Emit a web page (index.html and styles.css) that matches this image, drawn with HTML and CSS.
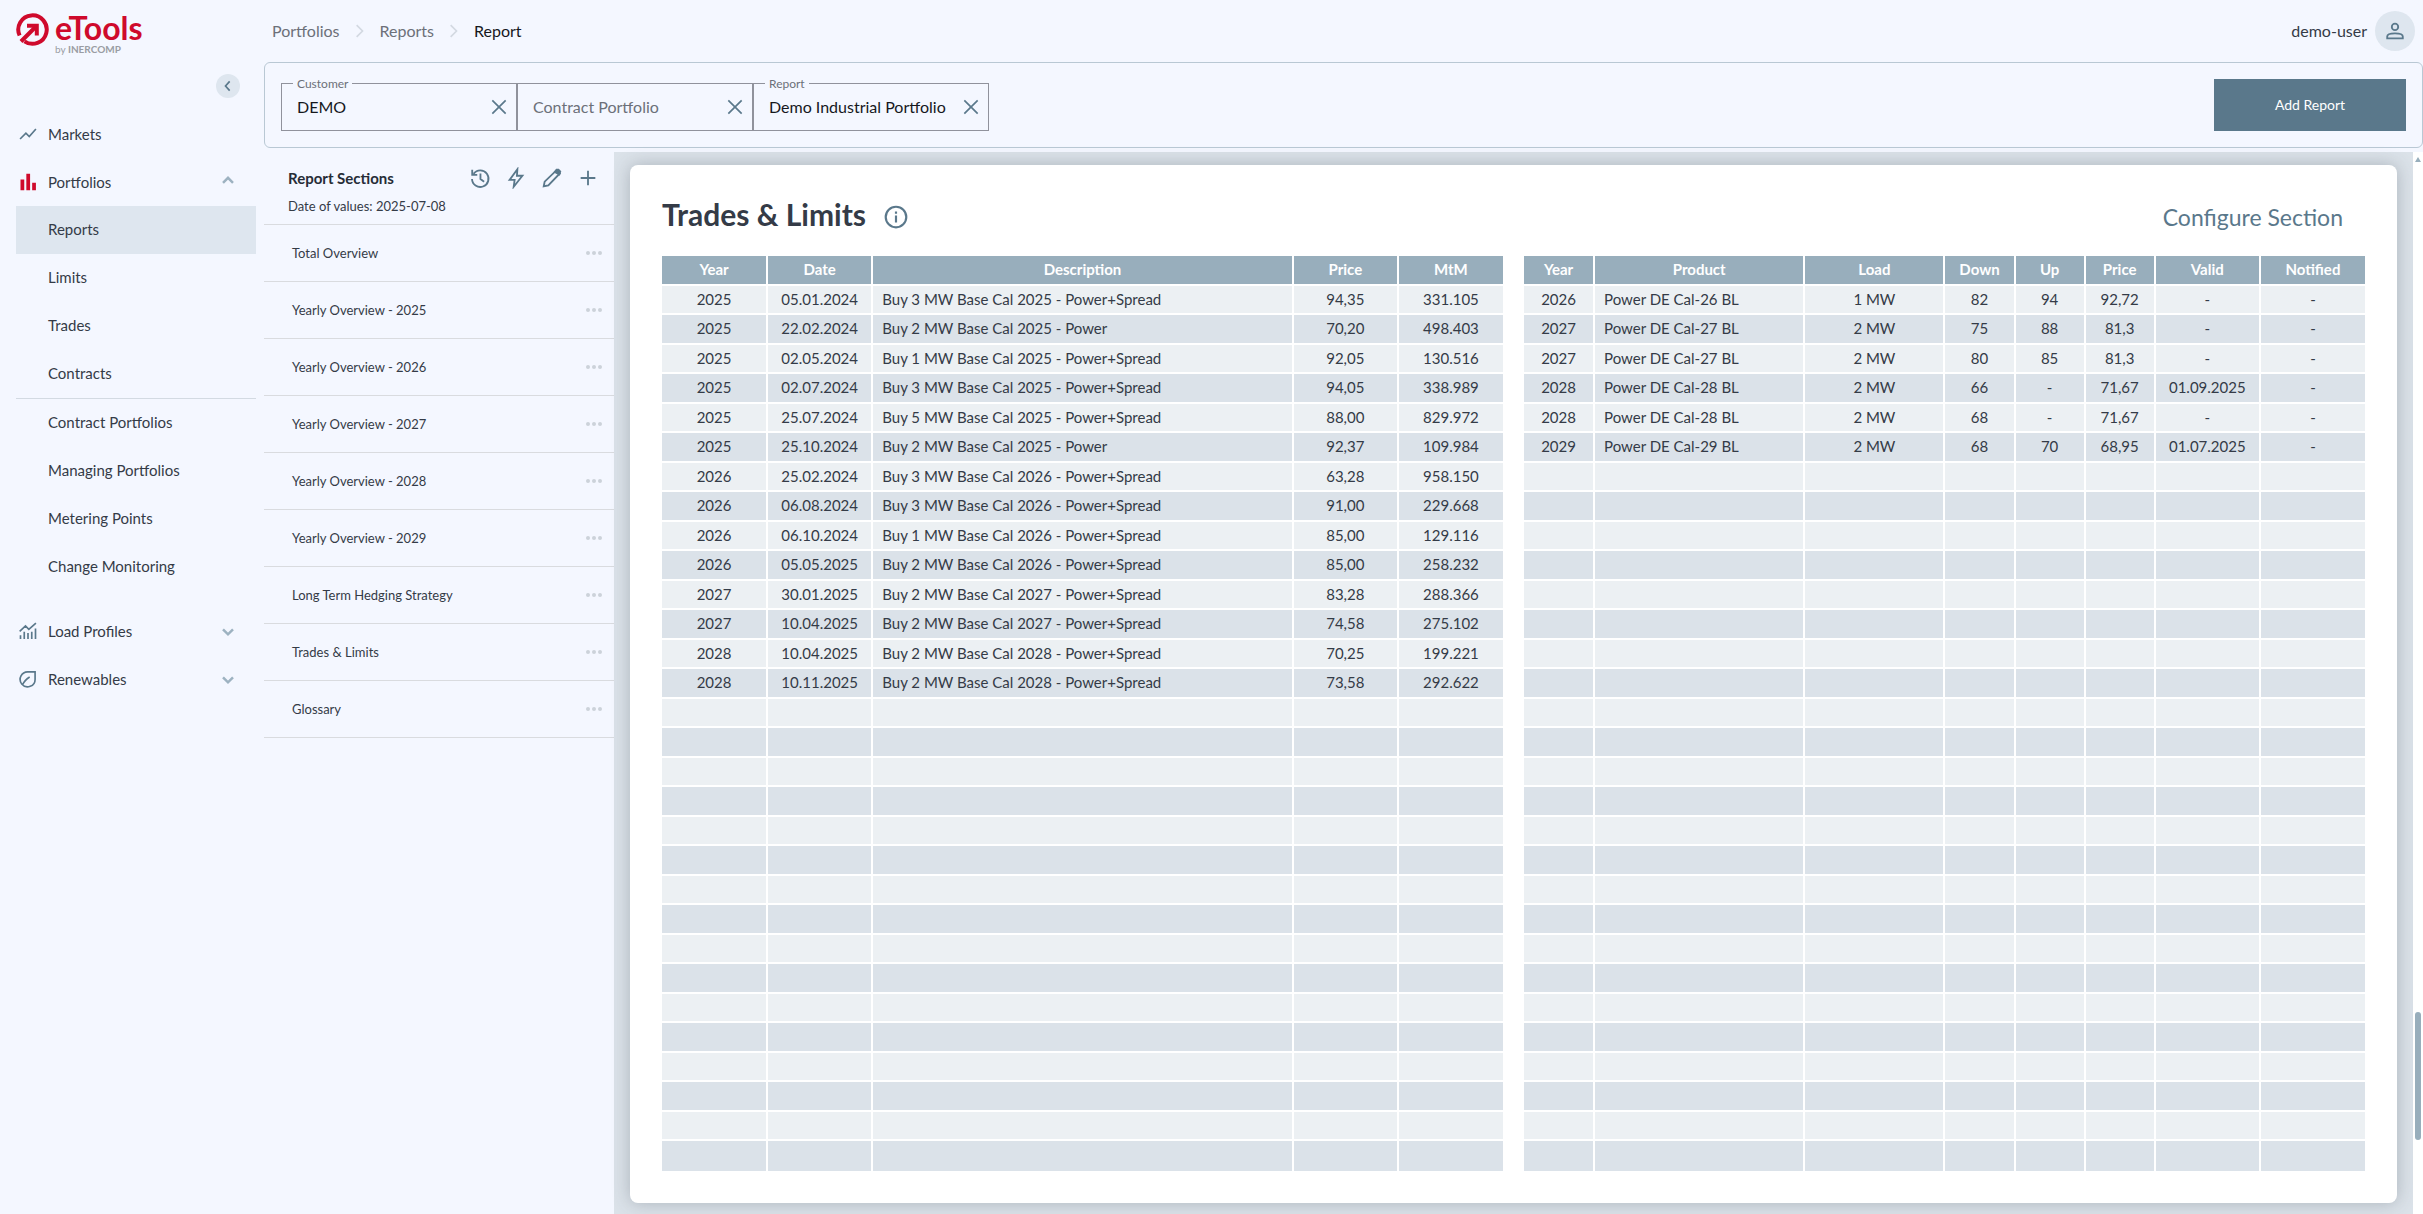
FILE: index.html
```html
<!DOCTYPE html>
<html lang="en">
<head>
<meta charset="utf-8">
<title>eTools - Report</title>
<link rel="stylesheet" href="styles.css">
</head>
<body>
<div class="app">
  <nav class="sidebar">
    <a class="logo" href="#">
      <svg class="logo-mark" viewBox="0 0 33 33"><path d="M3.600 22.500A14.200 14.200 0 1 1 8.500 28.300"/><path d="M5 28.500 20 13.500"/><path d="M11 12.700H20.800V22.500"/></svg>
      <span class="logo-words"><span class="logo-name">eTools</span><span class="logo-by">by <b>INERCOMP</b></span></span>
    </a>
    <button class="collapse" aria-label="Collapse menu"><svg viewBox="0 0 24 24"><path d="M14 6.500 9 12l5 5.500"/></svg></button>
    <ul class="menu">
      <li><a class="item" href="#"><svg class="icon" viewBox="0 0 24 24"><path d="M2.500 18 9.500 11l4 4L21.500 6"/></svg><span>Markets</span></a></li>
      <li><a class="item" href="#"><svg class="icon bars" viewBox="0 0 24 24"><path d="M3 9h4.500v13H3zM10 2h4.500v20H10zM17 13h4.500v9H17z"/></svg><span>Portfolios</span><svg class="chev" viewBox="0 0 24 24"><path d="m6 13 6-6 6 6"/></svg></a>
        <ul class="submenu">
          <li><a class="item sub active" href="#">Reports</a></li>
          <li><a class="item sub" href="#">Limits</a></li>
          <li><a class="item sub" href="#">Trades</a></li>
          <li><a class="item sub" href="#">Contracts</a></li>
          <li class="split"><a class="item sub" href="#">Contract Portfolios</a></li>
          <li><a class="item sub" href="#">Managing Portfolios</a></li>
          <li><a class="item sub" href="#">Metering Points</a></li>
          <li><a class="item sub" href="#">Change Monitoring</a></li>
        </ul>
      </li>
      <li><a class="item" href="#"><svg class="icon" viewBox="0 0 24 24"><path d="M2 12.500 9 6l4 4 8.500-7.500M3 17v4.500M7.500 13v8.500M12 14.500v7M16.500 13v8.500M21 9v12.500"/></svg><span>Load Profiles</span><svg class="chev" viewBox="0 0 24 24"><path d="m6 10 6 6 6-6"/></svg></a></li>
      <li><a class="item" href="#"><svg class="icon" viewBox="0 0 24 24"><path d="M20.500 3.500H12A9 9 0 0 0 4.500 18 9 9 0 0 0 20.500 12zM5 19.500C7 15.500 9.500 12 14 9.500"/></svg><span>Renewables</span><svg class="chev" viewBox="0 0 24 24"><path d="m6 10 6 6 6-6"/></svg></a></li>
    </ul>
  </nav>

  <div class="page">
    <header class="topbar">
      <nav class="crumbs" aria-label="Breadcrumb">
        <a href="#">Portfolios</a><svg viewBox="0 0 24 24"><path d="m8 5 7 7-7 7"/></svg><a href="#">Reports</a><svg viewBox="0 0 24 24"><path d="m8 5 7 7-7 7"/></svg><span>Report</span>
      </nav>
      <div class="user"><span>demo-user</span><button class="avatar" aria-label="Account"><svg viewBox="0 0 24 24"><circle cx="12" cy="7.500" r="3.500"/><path d="M3.500 20v-2c0-4.500 17-4.500 17 0v2z"/></svg></button></div>
    </header>

    <form class="filters">
      <div class="field"><label for="customer">Customer</label><input id="customer" value="DEMO"><button type="button" aria-label="Clear customer"><svg viewBox="0 0 24 24"><path d="m4 4 16 16M20 4 4 20"/></svg></button></div>
      <div class="field"><input id="contract" placeholder="Contract Portfolio" aria-label="Contract Portfolio"><button type="button" aria-label="Clear contract portfolio"><svg viewBox="0 0 24 24"><path d="m4 4 16 16M20 4 4 20"/></svg></button></div>
      <div class="field"><label for="report">Report</label><input id="report" value="Demo Industrial Portfolio"><button type="button" aria-label="Clear report"><svg viewBox="0 0 24 24"><path d="m4 4 16 16M20 4 4 20"/></svg></button></div>
      <button type="button" class="add">Add Report</button>
    </form>

    <div class="workspace">
      <aside class="sections">
        <div class="sections-head">
          <div class="sections-row">
            <h2>Report Sections</h2>
            <div class="tools">
              <button aria-label="History"><svg viewBox="0 0 24 24"><path d="M5 7.500A9 9 0 1 1 3.300 13M3.500 3v5.500H9M12.500 7v6l4 3"/></svg></button>
              <button aria-label="Run"><svg viewBox="0 0 24 24"><path d="M13.500 2.500 5 14h5.500L9.500 21.500 19 9.500h-6z"/></svg></button>
              <button aria-label="Edit"><svg viewBox="0 0 24 24"><path d="m3 21 1-5L17 3.500 20.500 7 8 20z"/><path d="m15 5.500 2-2.500h2l2 2-1 3z" fill="#5a788b"/></svg></button>
              <button aria-label="Add"><svg viewBox="0 0 24 24"><path d="M12 4v16M4 12h16"/></svg></button>
            </div>
          </div>
          <p>Date of values: 2025-07-08</p>
        </div>
        <ul class="section-list">
          <li><a href="#">Total Overview</a><button aria-label="More"><i></i><i></i><i></i></button></li>
          <li><a href="#">Yearly Overview - 2025</a><button aria-label="More"><i></i><i></i><i></i></button></li>
          <li><a href="#">Yearly Overview - 2026</a><button aria-label="More"><i></i><i></i><i></i></button></li>
          <li><a href="#">Yearly Overview - 2027</a><button aria-label="More"><i></i><i></i><i></i></button></li>
          <li><a href="#">Yearly Overview - 2028</a><button aria-label="More"><i></i><i></i><i></i></button></li>
          <li><a href="#">Yearly Overview - 2029</a><button aria-label="More"><i></i><i></i><i></i></button></li>
          <li><a href="#">Long Term Hedging Strategy</a><button aria-label="More"><i></i><i></i><i></i></button></li>
          <li><a href="#">Trades &amp; Limits</a><button aria-label="More"><i></i><i></i><i></i></button></li>
          <li><a href="#">Glossary</a><button aria-label="More"><i></i><i></i><i></i></button></li>
        </ul>
      </aside>

      <main class="canvas">
        <article class="card">
          <div class="card-head">
            <h1>Trades &amp; Limits</h1>
            <svg class="info" viewBox="0 0 24 24"><circle cx="12" cy="12" r="9.500"/><path d="M12 10.500V17M12 7v2"/></svg>
            <a href="#">Configure Section</a>
          </div>
          <div class="tables">
            <table class="trades">
              <colgroup><col class="w12"><col class="w12"><col class="w50"><col class="w12"><col class="w12"></colgroup>
              <thead><tr><th>Year<th>Date<th>Description<th>Price<th>MtM</thead>
              <tbody>
                <tr><td>2025<td>05.01.2024<td>Buy 3 MW Base Cal 2025 - Power+Spread<td>94,35<td>331.105
                <tr><td>2025<td>22.02.2024<td>Buy 2 MW Base Cal 2025 - Power<td>70,20<td>498.403
                <tr><td>2025<td>02.05.2024<td>Buy 1 MW Base Cal 2025 - Power+Spread<td>92,05<td>130.516
                <tr><td>2025<td>02.07.2024<td>Buy 3 MW Base Cal 2025 - Power+Spread<td>94,05<td>338.989
                <tr><td>2025<td>25.07.2024<td>Buy 5 MW Base Cal 2025 - Power+Spread<td>88,00<td>829.972
                <tr><td>2025<td>25.10.2024<td>Buy 2 MW Base Cal 2025 - Power<td>92,37<td>109.984
                <tr><td>2026<td>25.02.2024<td>Buy 3 MW Base Cal 2026 - Power+Spread<td>63,28<td>958.150
                <tr><td>2026<td>06.08.2024<td>Buy 3 MW Base Cal 2026 - Power+Spread<td>91,00<td>229.668
                <tr><td>2026<td>06.10.2024<td>Buy 1 MW Base Cal 2026 - Power+Spread<td>85,00<td>129.116
                <tr><td>2026<td>05.05.2025<td>Buy 2 MW Base Cal 2026 - Power+Spread<td>85,00<td>258.232
                <tr><td>2027<td>30.01.2025<td>Buy 2 MW Base Cal 2027 - Power+Spread<td>83,28<td>288.366
                <tr><td>2027<td>10.04.2025<td>Buy 2 MW Base Cal 2027 - Power+Spread<td>74,58<td>275.102
                <tr><td>2028<td>10.04.2025<td>Buy 2 MW Base Cal 2028 - Power+Spread<td>70,25<td>199.221
                <tr><td>2028<td>10.11.2025<td>Buy 2 MW Base Cal 2028 - Power+Spread<td>73,58<td>292.622
                <tr><td><td><td><td><td>
                <tr><td><td><td><td><td>
                <tr><td><td><td><td><td>
                <tr><td><td><td><td><td>
                <tr><td><td><td><td><td>
                <tr><td><td><td><td><td>
                <tr><td><td><td><td><td>
                <tr><td><td><td><td><td>
                <tr><td><td><td><td><td>
                <tr><td><td><td><td><td>
                <tr><td><td><td><td><td>
                <tr><td><td><td><td><td>
                <tr><td><td><td><td><td>
                <tr><td><td><td><td><td>
                <tr><td><td><td><td><td>
                <tr><td><td><td><td><td>
              </tbody>
            </table>
            <table class="limits">
              <colgroup><col class="w8"><col class="w25"><col class="w16"><col class="w8"><col class="w8"><col class="w8"><col class="w12"><col class="w12"></colgroup>
              <thead><tr><th>Year<th>Product<th>Load<th>Down<th>Up<th>Price<th>Valid<th>Notified</thead>
              <tbody>
                <tr><td>2026<td>Power DE Cal-26 BL<td>1 MW<td>82<td>94<td>92,72<td>-<td>-
                <tr><td>2027<td>Power DE Cal-27 BL<td>2 MW<td>75<td>88<td>81,3<td>-<td>-
                <tr><td>2027<td>Power DE Cal-27 BL<td>2 MW<td>80<td>85<td>81,3<td>-<td>-
                <tr><td>2028<td>Power DE Cal-28 BL<td>2 MW<td>66<td>-<td>71,67<td>01.09.2025<td>-
                <tr><td>2028<td>Power DE Cal-28 BL<td>2 MW<td>68<td>-<td>71,67<td>-<td>-
                <tr><td>2029<td>Power DE Cal-29 BL<td>2 MW<td>68<td>70<td>68,95<td>01.07.2025<td>-
                <tr><td><td><td><td><td><td><td><td>
                <tr><td><td><td><td><td><td><td><td>
                <tr><td><td><td><td><td><td><td><td>
                <tr><td><td><td><td><td><td><td><td>
                <tr><td><td><td><td><td><td><td><td>
                <tr><td><td><td><td><td><td><td><td>
                <tr><td><td><td><td><td><td><td><td>
                <tr><td><td><td><td><td><td><td><td>
                <tr><td><td><td><td><td><td><td><td>
                <tr><td><td><td><td><td><td><td><td>
                <tr><td><td><td><td><td><td><td><td>
                <tr><td><td><td><td><td><td><td><td>
                <tr><td><td><td><td><td><td><td><td>
                <tr><td><td><td><td><td><td><td><td>
                <tr><td><td><td><td><td><td><td><td>
                <tr><td><td><td><td><td><td><td><td>
                <tr><td><td><td><td><td><td><td><td>
                <tr><td><td><td><td><td><td><td><td>
                <tr><td><td><td><td><td><td><td><td>
                <tr><td><td><td><td><td><td><td><td>
                <tr><td><td><td><td><td><td><td><td>
                <tr><td><td><td><td><td><td><td><td>
                <tr><td><td><td><td><td><td><td><td>
                <tr><td><td><td><td><td><td><td><td>
              </tbody>
            </table>
          </div>
        </article>
      </main>
      <div class="scrollbar" aria-hidden="true"><span class="arrow"></span><span class="thumb"></span></div>
    </div>
  </div>
</div>
</body>
</html>
```
FILE: styles.css
```css
* { box-sizing: border-box; }
body {
  margin: 0;
  background: #f4f7ff;
  color: #343b47;
  font: 16px/24px Lato, "Noto Sans", sans-serif;
}
ul { list-style: none; margin: 0; padding: 0; }
a { color: inherit; text-decoration: none; }
button { border: 0; padding: 0; background: none; font: inherit; color: inherit; cursor: pointer; }
svg { fill: none; stroke: #5a788b; stroke-width: 2; flex: none; }

.app { display: flex; min-height: 100vh; }

/* Sidebar */
.sidebar { width: 264px; flex: none; padding: 13px 8px 0 16px; font-size: 15px; }
.logo { display: flex; gap: 6px; height: 42px; }
.logo-mark { width: 33px; height: 33px; stroke: #cf0a2c; stroke-width: 4; }
.logo-words { display: flex; flex-direction: column; }
.logo-name { color: #cf0a2c; font-size: 32px; line-height: 30px; font-weight: 700; }
.logo-by { color: #9a9da3; font-size: 10px; line-height: 12px; }
.collapse {
  display: flex; align-items: center; justify-content: center;
  width: 24px; height: 24px; margin: 19px 16px 0 auto;
  border-radius: 50%; background: #dee6ef;
}
.collapse svg { width: 20px; height: 20px; }
.menu { margin-top: 12px; }
.item { display: flex; align-items: center; height: 48px; padding-right: 18px; }
.icon { width: 20px; height: 20px; margin: 0 10px 0 2px; }
.bars { fill: #cf0a2c; stroke: none; }
.chev { width: 20px; height: 20px; margin-left: auto; stroke: #9db2c1; stroke-width: 3; }
.item.sub { padding: 0 0 2px 32px; }
.item.active { background: #dee6ef; }
.submenu { padding-bottom: 16px; }
.split { border-top: 1px solid #d3dae2; }

/* Header */
.page { flex: 1; min-width: 0; display: flex; flex-direction: column; }
.topbar { display: flex; justify-content: space-between; height: 62px; padding: 0 8px; align-items: center; }
.crumbs { display: flex; align-items: center; color: #6c7079; gap: 10px; }
.crumbs svg { width: 20px; height: 20px; stroke: #d3d9e2; }
.crumbs span { color: #16181d; }
.user { display: flex; align-items: center; gap: 8px; }
.avatar { display: flex; align-items: center; justify-content: center; width: 40px; height: 40px; border-radius: 50%; background: #dee6ef; }
.avatar svg { width: 22px; height: 22px; }

/* Filter bar */
.filters {
  display: flex; align-items: center; height: 86px; padding: 0 16px;
  border: 1px solid #b9c8d4; border-radius: 6px;
}
.field { position: relative; display: flex; align-items: center; width: 236px; height: 48px; margin-top: 4px; border: 1px solid #90929c; padding: 0 7px 0 15px; }
.field label {
  position: absolute; top: -8px; left: 11px; padding: 0 4px;
  background: #f4f7ff; color: #6c7079; font-size: 12px; line-height: 16px;
}
.field input { flex: 1; min-width: 0; border: 0; padding: 0; background: none; font: inherit; color: #16181d; }
.field input::placeholder { color: #6c7079; opacity: 1; }
.field button { display: flex; }
.field svg { width: 20px; height: 20px; }
.add { width: 192px; height: 52px; margin-left: auto; background: #5a788b; color: #fff; font-size: 14px; }

/* Section list */
.workspace { flex: 1; display: flex; margin-top: 4px; }
.sections { width: 350px; flex: none; font-size: 13px; }
.sections-head { height: 73px; padding: 14px 14px 0 24px; border-bottom: 1px solid #d9dbdf; }
.sections-row { display: flex; justify-content: space-between; align-items: center; height: 24px; }
.sections h2 { margin: 0; font-size: 15px; line-height: 24px; color: #262c36; }
.sections p { margin: 4px 0 0; }
.tools { display: flex; gap: 12px; }
.tools button { display: flex; width: 24px; height: 24px; align-items: center; justify-content: center; }
.tools svg { width: 22px; height: 22px; }
.section-list li { display: flex; justify-content: space-between; align-items: center; height: 57px; padding: 0 12px 0 28px; border-bottom: 1px solid #d9dbdf; }
.section-list button { display: flex; gap: 2px; }
.section-list i { width: 4px; height: 4px; border-radius: 50%; background: #ccd2da; }

/* Report page */
.canvas { flex: 1; min-width: 0; padding: 13px 16px 10px; background: #dbe2e9; }
.card { padding: 31px 32px 32px; border-radius: 8px; background: #fff; box-shadow: 0 0 18px rgba(60, 70, 80, .3); }
.card-head { display: flex; align-items: center; height: 36px; margin-bottom: 24px; }
.card-head h1 { margin: 0; font-size: 30px; line-height: 36px; font-weight: 700; }
.card-head a { margin: 6px 22px 0 auto; font-size: 23px; line-height: 32px; color: #5a788b; }
.info { width: 26px; height: 26px; margin: 6px 0 0 17px; }
.tables { display: grid; grid-template-columns: 1fr 1fr; gap: 21px; align-items: start; }
table { width: 100%; table-layout: fixed; border-collapse: separate; border-spacing: 0; font-size: 15px; line-height: 20px; }
.w8 { width: 8.333%; }
.w12 { width: 12.5%; }
.w16 { width: 16.667%; }
.w25 { width: 25%; }
.w50 { width: 50%; }
th, td { height: 30px; padding: 0 0 2px; text-align: center; border: solid #fff; border-width: 0 1px 2px; white-space: nowrap; }
th:first-child, td:first-child { border-left: 0; }
th:last-child, td:last-child { border-right: 0; }
th { background: #98aebc; color: #fff; font-weight: 700; }
td { background: #ecf0f3; }
tbody tr:nth-child(even) td { background: #dbe2e9; }
tbody tr:nth-child(odd) td { height: 29px; }
tbody tr:last-child td { border-bottom: 0; }
.trades td:nth-child(3), .limits td:nth-child(2) { text-align: left; padding-left: 9px; }

/* Scroll track */
.scrollbar { width: 10px; flex: none; display: flex; flex-direction: column; align-items: center; background: #fff; padding: 5px 0 74px; }
.arrow { border: 3px solid transparent; border-top: 0; border-bottom: 5px solid #98aebc; }
.thumb { width: 6px; height: 128px; margin-top: auto; border-radius: 3px; background: #98aebc; }
```
